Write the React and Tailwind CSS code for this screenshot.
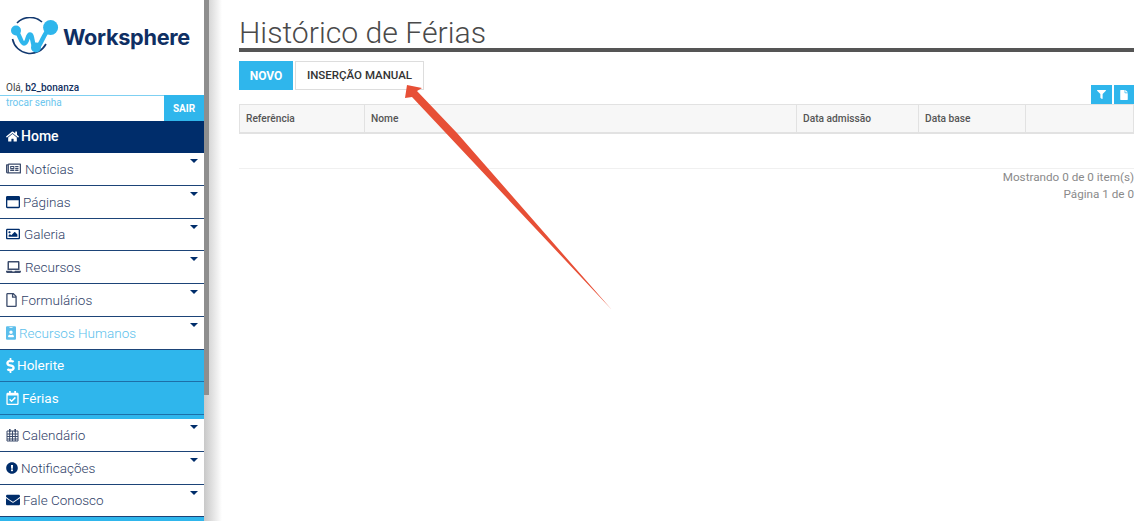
import React from 'react';
import {
  FaHome, FaRegNewspaper, FaRegWindowMaximize, FaRegImage, FaLaptop, FaRegFile, FaIdBadge,
  FaDollarSign, FaRegCalendarCheck, FaExclamationCircle, FaEnvelope, FaFilter, FaFile,
} from 'react-icons/fa';

const Logo = () => (
  <div className="flex items-center h-[79px] pl-[11px]">
    <svg width="50" height="40" viewBox="0 0 50 40" className="shrink-0 mt-[-6px]">
      <path d="M6 6 A18 18 0 0 1 31 5" fill="none" stroke="#12386f" strokeWidth="1.6" />
      <path d="M1.5 22 A18 18 0 0 0 35 27" fill="none" stroke="#12386f" strokeWidth="1.6" />
      <path d="M5 13.5 C9 18 10 26.5 13 26.5 C17 26.5 16 17.5 19 17.5 C22 17.5 21 30.5 25 30.5 C30 30.5 32 16 39.6 10.5" fill="none" stroke="#2fb6ec" strokeWidth="4.5" strokeLinecap="round" />
      <circle cx="5" cy="13.5" r="5" fill="#2fb6ec" />
      <circle cx="39.6" cy="10.5" r="7.5" fill="#2fb6ec" />
      <circle cx="25" cy="30.5" r="5" fill="#2fb6ec" />
    </svg>
    <span className="ml-[2px] mt-[-5px] text-[21.7px] font-bold tracking-[-0.3px] text-[#0f2f63] font-['Inter',sans-serif]">Worksphere</span>
  </div>
);

const GridCalendar = () => (
  <svg width="13" height="14" viewBox="0 0 13 14">
    <path d="M1 3h11v10H1zM1 6h11M1 8.5h11M1 11h11M3.7 3v10M6.5 3v10M9.3 3v10" fill="none" stroke="#3c4c6c" strokeWidth="1" />
    <rect x="3" y="1" width="1.6" height="3" fill="#3c4c6c" />
    <rect x="8.4" y="1" width="1.6" height="3" fill="#3c4c6c" />
  </svg>
);

const menuTop = [
  { label: 'Notícias', icon: <FaRegNewspaper className="w-[15px] h-[15px]" />, gap: 'ml-[4px]' },
  { label: 'Páginas', icon: <FaRegWindowMaximize className="w-[14px] h-[14px] text-[#002d6b]" />, gap: 'ml-[3px]' },
  { label: 'Galeria', icon: <FaRegImage className="w-[14px] h-[14px] text-[#002d6b]" />, gap: 'ml-[4px]' },
  { label: 'Recursos', icon: <FaLaptop className="w-[15px] h-[14px]" />, gap: 'ml-[4px]' },
  { label: 'Formulários', icon: <FaRegFile className="w-[11px] h-[14px]" />, gap: 'ml-[4px]' },
];

const menuBottom = [
  { label: 'Calendário', icon: <GridCalendar />, gap: 'ml-[3px]' },
  { label: 'Notificações', icon: <FaExclamationCircle className="w-[12px] h-[12px] text-[#002d6b]" />, gap: 'ml-[3px]' },
  { label: 'Fale Conosco', icon: <FaEnvelope className="w-[14px] h-[14px] text-[#002d6b]" />, gap: 'ml-[3px]' },
];

const MenuRow = ({ item }) => (
  <div className="relative flex items-center h-[32.75px] pl-[6px] bg-white border-b border-[#1d4478] text-[13.5px] font-light text-[#2f4168]">
    <span className="text-[#3c4c6c]">{item.icon}</span>
    <span className={item.gap}>{item.label}</span>
    <span className="absolute right-[6px] top-[6px] w-0 h-0 border-x-[4px] border-x-transparent border-t-[4px] border-t-[#002d6b]" />
  </div>
);

const columns = [
  { label: 'Referência', w: 'w-[125px]' },
  { label: 'Nome', w: 'w-[432px]' },
  { label: 'Data admissão', w: 'w-[122px]' },
  { label: 'Data base', w: 'w-[107px]' },
  { label: '', w: 'flex-1' },
];

export default function App() {
  return (
    <div className="relative flex h-[521px] overflow-hidden bg-white font-['Roboto',sans-serif]">
      {/* barra lateral */}
      <aside className="flex w-[222px] shrink-0">
        <div className="w-[204px] shrink-0">
          <Logo />
          <div className="flex flex-col h-[42px] text-[10px]">
            <div className="h-[16px] pl-[6px] pt-[2px] leading-[13px] text-[#444]">
              Olá, <b className="font-medium text-[#12305f]">b2_bonanza</b>
            </div>
            <div className="flex flex-1 border-t border-[#7fd0f2]">
              <div className="flex-1 pl-[6px] pt-[1px] leading-[11px] text-[#6cc6ee]">trocar senha</div>
              <div className="flex items-center justify-center w-[40px] mt-[-1px] bg-[#2fb6ec] text-white font-bold">SAIR</div>
            </div>
          </div>
          <div className="flex items-center h-[32px] pl-[6px] pb-[1px] bg-[#002d6b] text-white text-[14px] font-medium">
            <FaHome className="w-[13px] h-[13px] mr-[2px]" />Home
          </div>
          {menuTop.map(item => <MenuRow key={item.label} item={item} />)}
          <div className="relative flex items-center h-[32.75px] pl-[6px] border-b border-[#1d4478] text-[13.5px] font-light text-[#5cbfec]">
            <FaIdBadge className="w-[10px] h-[14px]" />
            <span className="ml-[3px]">Recursos Humanos</span>
            <span className="absolute right-[6px] top-[6px] w-0 h-0 border-x-[4px] border-x-transparent border-t-[4px] border-t-[#002d6b]" />
          </div>
          <div className="flex items-center h-[32.75px] pl-[6px] bg-[#2fb6ec] border-b border-[#1d6fa8] text-[13.5px] text-white">
            <FaDollarSign className="w-[9px] h-[15px]" /><span className="ml-[2px]">Holerite</span>
          </div>
          <div className="flex items-center h-[32.75px] pl-[6px] bg-[#2fb6ec] border-b border-[#1d6fa8] text-[13.5px] text-white">
            <FaRegCalendarCheck className="w-[13px] h-[14px]" /><span className="ml-[3px]">Férias</span>
          </div>
          <div className="h-[4px] bg-[#2fb6ec]" />
          {menuBottom.map(item => <MenuRow key={item.label} item={item} />)}
          <div className="h-[4px] bg-[#2fb6ec]" />
        </div>
        <div className="flex-1 bg-gradient-to-r from-[#c8c8c8] to-white">
          <div className="w-[5px] h-[395px] bg-[#8e8e8e]" />
        </div>
      </aside>

      {/* conteudo */}
      <main className="flex-1 min-w-0 pl-[17px] pr-[12px]">
        <h1 className="h-[52px] pt-[15px] border-b-[4px] border-[#555] text-[30.2px] leading-[36px] font-light text-[#4a4a4a]">
          Histórico de Férias
        </h1>
        <div className="flex items-start gap-[2px] mt-[9px] h-[43px] relative">
          <button className="w-[54px] h-[29px] bg-[#2fb6ec] text-white text-[12px] font-bold">NOVO</button>
          <button className="w-[129px] h-[29px] bg-white border border-[#ddd] text-[#333] text-[11.5px] font-medium">INSERÇÃO MANUAL</button>
          <div className="absolute right-0 top-[24px] flex gap-[2px]">
            <span className="flex items-center justify-center w-[21px] h-[19px] bg-[#2fb6ec] text-white"><FaFilter className="w-[9px] h-[9px]" /></span>
            <span className="flex items-center justify-center w-[20px] h-[19px] bg-[#2fb6ec] text-white"><FaFile className="w-[8px] h-[10px]" /></span>
          </div>
        </div>
        <div className="flex h-[30px] bg-[#f7f7f7] border border-[#e2e2e2] border-b-2 text-[10.2px] font-medium text-[#555]">
          {columns.map(c => (
            <div key={c.label || 'acoes'} className={`${c.w} flex items-center pl-[6px] border-r border-[#e2e2e2] last:border-r-0`}>{c.label}</div>
          ))}
        </div>
        <div className="h-[35px] border-b border-[#f0f0f0]" />
        <div className="text-right text-[11.7px] leading-[16.5px] text-[#8a8a8a]">
          <div>Mostrando 0 de 0 item(s)</div>
          <div>Página 1 de 0</div>
        </div>
      </main>

      {/* seta da anotacao */}
      <svg className="absolute left-0 top-0 pointer-events-none" width="1146" height="521">
        <polygon points="407,85 422,88 417,91 457,133 612,310 412,97 405,98" fill="#e74f36" />
      </svg>
    </div>
  );
}
